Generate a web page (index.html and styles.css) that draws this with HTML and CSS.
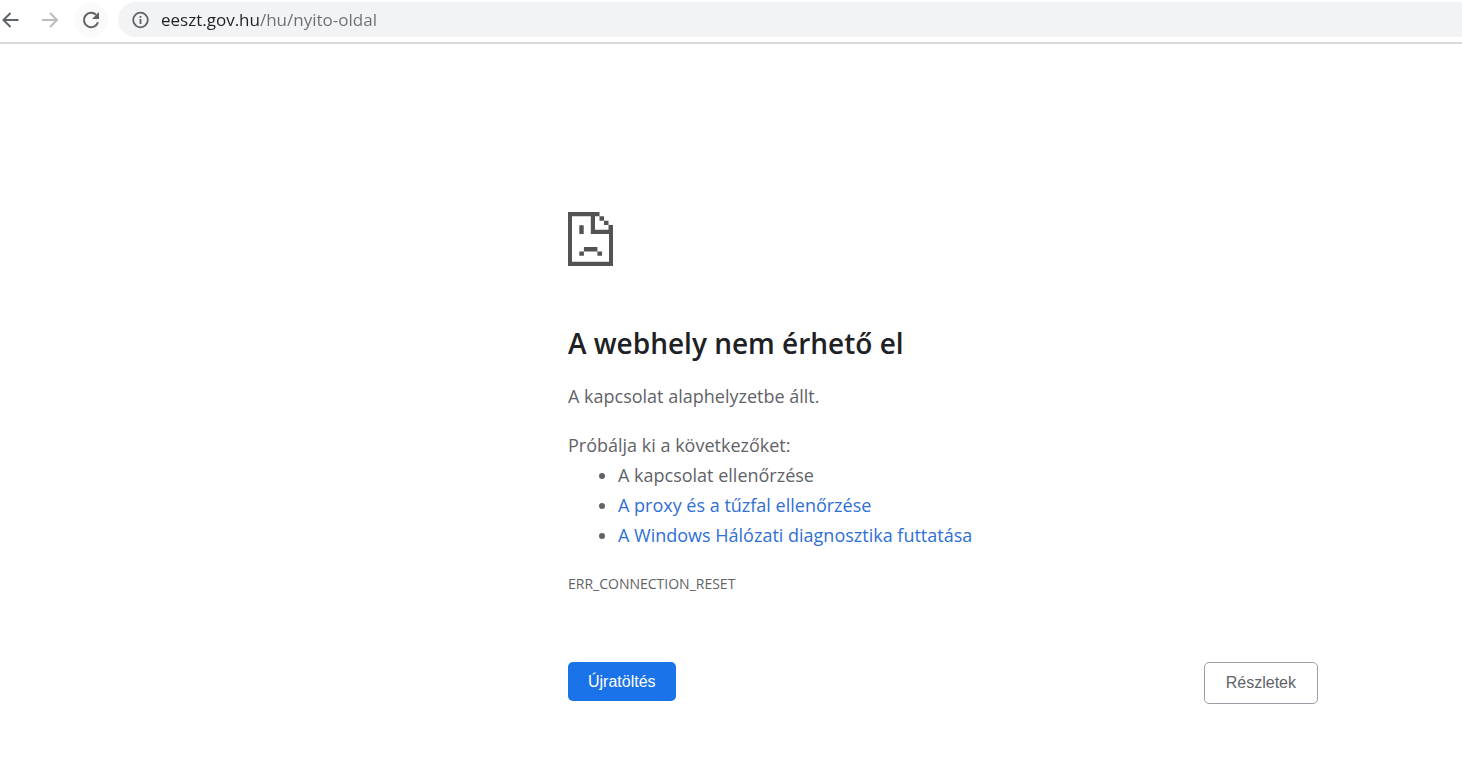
FILE: index.html
```html
<!DOCTYPE html>
<html lang="hu">
  <head>
    <meta charset="UTF-8" />
    <meta name="viewport" content="width=device-width, initial-scale=1" />
    <title>eeszt.gov.hu</title>
    <link rel="stylesheet" href="styles.css">
  </head>
  <body>
    <header class="toolbar">
      <button class="nav-button" type="button" aria-label="Vissza">
        <svg width="20" height="20" viewBox="0 0 20 20" fill="none" stroke="#5f6368" stroke-width="2">
          <path d="M17.5 10H2.5M9.5 3l-7 7 7 7" />
        </svg>
      </button>
      <button class="nav-button" type="button" aria-label="Előre" disabled>
        <svg width="20" height="20" viewBox="0 0 20 20" fill="none" stroke="#babcbe" stroke-width="2">
          <path d="M1 10h15M9 3l7 7-7 7" />
        </svg>
      </button>
      <button class="nav-button reload" type="button" aria-label="Frissítés">
        <svg width="20" height="20" viewBox="0 0 20 20">
          <path d="M15.2 4.9A7.2 7.2 0 1 0 17 12.2" fill="none" stroke="#5f6368" stroke-width="2" />
          <path d="M18 2v7h-7z" fill="#5f6368" />
        </svg>
      </button>
      <div class="omnibox">
        <svg width="18" height="18" viewBox="0 0 18 18" aria-hidden="true">
          <circle cx="8.5" cy="9" r="7.3" fill="none" stroke="#5f6368" stroke-width="1.8" />
          <path d="M7.6 8h1.8v5H7.6zM7.6 5h1.8v1.8H7.6z" fill="#5f6368" />
        </svg>
        <input class="address" type="text" aria-label="Cím" value="eeszt.gov.hu/hu/nyito-oldal" spellcheck="false" />
      </div>
    </header>

    <main class="error-page">
      <svg class="error-icon" width="45" height="54" viewBox="0 0 45 54" aria-hidden="true" fill="#535353">
        <path fill-rule="evenodd" d="M0 0h31.5v4.3H36v4.4h4.5V13H45v41H0zM4 4.3v45.4h37V22H22.8V4.3zM27 4.3v13.4h13.5V13H36V8.7h-4.5V4.3z" />
        <path d="M11.3 13.3h4.4V22h-4.4zM15.9 35h13.5v4.4H15.9zM11.3 39.4h4.6v4.3h-4.6zM29.4 39.4H34v4.3h-4.6z" />
      </svg>
      <h1>A webhely nem érhető el</h1>
      <p>A kapcsolat alaphelyzetbe állt.</p>
      <div class="suggestions">
        <p>Próbálja ki a következőket:</p>
        <ul>
          <li>A kapcsolat ellenőrzése</li>
          <li><a href="#proxy">A proxy és a tűzfal ellenőrzése</a></li>
          <li><a href="#diagnosztika">A Windows Hálózati diagnosztika futtatása</a></li>
        </ul>
      </div>
      <p class="error-code">ERR_CONNECTION_RESET</p>
      <div class="buttons">
        <button class="primary" type="button">Újratöltés</button>
        <button class="secondary" type="button">Részletek</button>
      </div>
    </main>
  </body>
</html>
```
FILE: styles.css
```css
body {
  margin: 0;
  background: #fff;
  color: #5f6368;
  font-family: "Open Sans", "Noto Sans", sans-serif;
  font-size: 18px;
  line-height: 30px;
}

.toolbar {
  display: flex;
  align-items: center;
  padding: 2px 0 5px;
  border-bottom: 2px solid #dadada;
}

.nav-button {
  display: flex;
  align-items: center;
  justify-content: center;
  width: 34px;
  height: 34px;
  margin-right: 6px;
  padding: 0;
  border: 0;
  border-radius: 50%;
  background: none;
}

.nav-button:first-child {
  margin-left: -6px;
}

.nav-button.reload {
  margin-right: 10px;
  background: #fafafa;
}

.omnibox {
  display: flex;
  flex: 1;
  align-items: center;
  gap: 11px;
  height: 35px;
  padding-left: 14px;
  border-radius: 18px 0 0 18px;
  background: #f1f3f4;
}

/* the host is darker than the path */
.address {
  flex: 1;
  height: 30px;
  padding: 0;
  border: 0;
  outline: 0;
  background: linear-gradient(to right, #202124 98px, #6b6f73 98px);
  -webkit-background-clip: text;
  background-clip: text;
  -webkit-text-fill-color: transparent;
  font-family: inherit;
  font-size: 17px;
}

.error-page {
  max-width: 750px;
  margin: 168px 144px 0 auto;
}

.error-icon {
  display: block;
}

h1 {
  margin: 62px 0 23px;
  color: #202124;
  font-size: 28px;
  font-weight: 600;
  line-height: 30px;
}

p {
  margin: 0;
}

.suggestions {
  margin: 19px 0;
}

ul {
  margin: 0;
  padding-left: 50px;
}

a {
  color: #2f6fd6;
  text-decoration: none;
}

.error-code {
  font-size: 14px;
}

.buttons {
  display: flex;
  align-items: flex-start;
  justify-content: space-between;
  margin-top: 63px;
}

.buttons button {
  padding: 10px 20px;
  border: 0;
  border-radius: 5px;
  font-family: "Liberation Sans", Arial, sans-serif;
  font-size: 16px;
  line-height: 19px;
}

.buttons .primary {
  background: #1a73e8;
  color: #fff;
}

.buttons .secondary {
  padding: 11px 21px;
  border: 1px solid #9aa0a6;
  background: #fff;
  color: #5f6368;
  line-height: 18px;
}
```
